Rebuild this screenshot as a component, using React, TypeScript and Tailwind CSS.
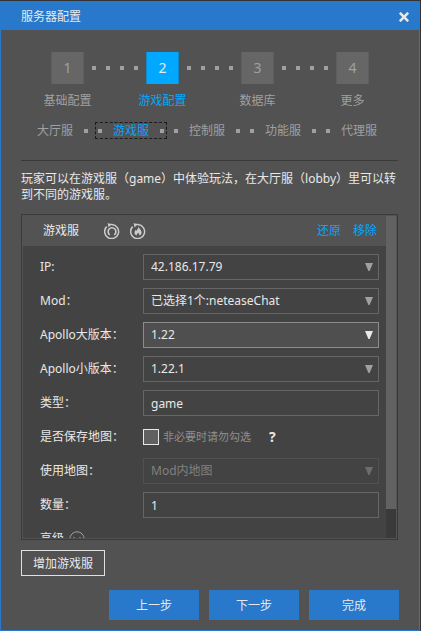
import { useState } from "react";
import type { ReactNode } from "react";

const steps = ["基础配置", "游戏配置", "数据库", "更多"];
const servers = ["大厅服", "游戏服", "控制服", "功能服", "代理服"];

function Dot() {
  return <span className="size-1 shrink-0 bg-[#a0a0a0]" />;
}

function Stepper() {
  return (
    <ol className="flex justify-between px-[42px] pt-[22px]">
      {steps.map((label, i) => {
        const active = i === 1;
        return (
          <li key={label} className={i < steps.length - 1 ? "flex flex-1" : "flex"}>
            <div className="flex w-[49px] shrink-0 flex-col items-center">
              <span
                className={
                  active
                    ? "flex h-8 w-[33px] items-center justify-center border-x border-[#1489c9] bg-[#00a8ff] text-sm text-[#e8e8e8]"
                    : "flex h-8 w-[33px] items-center justify-center border-x border-[#5e5e5e] bg-[#666666] text-sm text-[#a0a0a0]"
                }
              >
                {i + 1}
              </span>
              <span
                className={
                  active
                    ? "mt-[9px] leading-4 whitespace-nowrap text-[#00a8ff]"
                    : "mt-[9px] leading-4 whitespace-nowrap text-[#a0a0a0]"
                }
              >
                {label}
              </span>
            </div>
            {i < steps.length - 1 && (
              <div className="flex h-8 flex-1 items-center justify-center gap-[10px]">
                <Dot />
                <Dot />
                <Dot />
                <Dot />
              </div>
            )}
          </li>
        );
      })}
    </ol>
  );
}

function ServerTabs() {
  return (
    <nav className="mt-[13px] flex justify-center gap-1 pr-[6px]">
      {servers.map((label, i) => (
        <button
          key={label}
          type="button"
          className={
            i === 1
              ? "flex h-[17px] w-[72px] items-center justify-between border border-dashed border-[#1c1c1c] px-[2px] pt-px leading-3 text-[#00a8ff]"
              : "flex h-[17px] w-[72px] items-center justify-between px-[3px] pt-px leading-3 text-[#a0a0a0]"
          }
        >
          {i > 0 ? <Dot /> : <span className="size-1" />}
          {label}
          {i < servers.length - 1 ? <Dot /> : <span className="size-1" />}
        </button>
      ))}
    </nav>
  );
}

function Row({ label, id, children }: { label: string; id: string; children: ReactNode }) {
  return (
    <div className="flex h-[26px] shrink-0 items-center">
      <label htmlFor={id} className="w-[103px] shrink-0 whitespace-nowrap">
        {label}
      </label>
      {children}
    </div>
  );
}

function Select({
  label,
  id,
  value,
  focused = false,
  disabled = false,
}: {
  label: string;
  id: string;
  value: string;
  focused?: boolean;
  disabled?: boolean;
}) {
  const look = focused
    ? "border-[#8c8c8c] bg-[#4f4f4f]"
    : disabled
      ? "border-[#505050] text-[#808080] opacity-100"
      : "border-[#666666]";
  const arrow = focused ? "text-[#e8e8e8]" : disabled ? "text-[#6c6c6c]" : "text-[#a0a0a0]";
  return (
    <Row label={label} id={id}>
      <div className="relative min-w-0 flex-1">
        <select
          id={id}
          disabled={disabled}
          className={`block h-[26px] w-full appearance-none border px-[7px] outline-none ${look}`}
        >
          <option>{value}</option>
        </select>
        <svg
          viewBox="0 0 8 8"
          className={`pointer-events-none absolute top-[9px] right-[6px] size-2 ${arrow}`}
          fill="currentColor"
          aria-hidden="true"
        >
          <path d="M0 0H8L4.6 8H3.4Z" />
        </svg>
      </div>
    </Row>
  );
}

function TextField({ label, id, initial }: { label: string; id: string; initial: string }) {
  const [value, setValue] = useState(initial);
  return (
    <Row label={label} id={id}>
      <input
        id={id}
        type="text"
        value={value}
        onChange={(e) => setValue(e.target.value)}
        className="h-[26px] min-w-0 flex-1 border border-[#666666] px-[7px] outline-none"
      />
    </Row>
  );
}

function RestartIcon({ flame = false }: { flame?: boolean }) {
  return (
    <svg viewBox="0 0 16 16" className="size-4" fill="none" stroke="currentColor" aria-hidden="true">
      <path d="M2.7 3.6A7 7 0 1 0 8 1.6H5" strokeWidth="1.5" />
      <path d="M3.6 0L7.2 1.6L4.6 4.4Z" fill="currentColor" stroke="none" />
      {flame ? (
        <path
          d="M8.3 3.6C8.6 5.4 11.8 7 11.6 9.8C11.5 11.2 10.6 12.2 9.3 12.6C9.6 11.4 9.1 10.6 8.1 9.7C7.2 10.6 6.6 11.4 6.9 12.6C5.3 12.1 4.4 10.9 4.5 9.5C4.6 8.4 5.2 7.7 5.6 6.8L6.6 7.7C7.5 6.6 8.3 5.3 8.3 3.6Z"
          fill="currentColor"
          stroke="none"
        />
      ) : (
        <path d="M5.8 11.8A3.9 3.9 0 1 1 10.2 11.8" strokeWidth="1.6" />
      )}
    </svg>
  );
}

function GamePanel() {
  return (
    <section className="mr-[21px] ml-5 mt-[11px] flex min-h-0 flex-1 border border-[#3a3a3a] bg-[#535353] p-px">
      <div className="flex min-w-0 flex-1 flex-col overflow-hidden">
        <header className="flex h-[30px] shrink-0 items-center pr-[9px] pl-5">
          <h2>游戏服</h2>
          <button type="button" aria-label="重启" className="ml-[25px] text-[#cccccc]">
            <RestartIcon />
          </button>
          <button type="button" aria-label="热更新" className="ml-[10px] text-[#cccccc]">
            <RestartIcon flame />
          </button>
          <button type="button" className="ml-auto text-[#00a8ff]">
            还原
          </button>
          <button type="button" className="ml-3 text-[#00a8ff]">
            移除
          </button>
        </header>
        <div className="flex min-h-0 flex-1 flex-col gap-2 overflow-hidden bg-[#434343] pt-2 pr-[7px] pl-[17px]">
          <Select id="ip" label="IP:" value="42.186.17.79" />
          <Select id="mod" label="Mod：" value="已选择1个:neteaseChat" />
          <Select id="major" label="Apollo大版本：" value="1.22" focused />
          <Select id="minor" label="Apollo小版本：" value="1.22.1" />
          <TextField id="type" label="类型：" initial="game" />
          <Row id="save" label="是否保存地图：">
            <input
              id="save"
              type="checkbox"
              className="size-4 appearance-none border border-[#e8e8e8] bg-[#606060] checked:bg-[#00a8ff]"
            />
            <span className="ml-1 text-[11px] text-[#909090]">非必要时请勿勾选</span>
            <button type="button" aria-label="帮助" className="ml-[18px] text-sm font-bold">
              ?
            </button>
          </Row>
          <Select id="map" label="使用地图：" value="Mod内地图" disabled />
          <TextField id="count" label="数量：" initial="1" />
          <button type="button" className="flex h-[26px] shrink-0 items-center gap-[5px]">
            高级
            <svg viewBox="0 0 16 16" className="size-4 text-[#a0a0a0]" fill="none" stroke="currentColor" aria-hidden="true">
              <circle cx="8" cy="8" r="7.2" />
              <path d="M4.5 6.5L8 10L11.5 6.5" strokeWidth="1.5" />
            </svg>
          </button>
        </div>
      </div>
      <div className="flex w-[10px] shrink-0 flex-col bg-[#3a3a3a]">
        <div className="h-[91%] bg-[#626262]" />
      </div>
    </section>
  );
}

export default function App() {
  return (
    <div className="flex h-screen flex-col bg-[#333333] pt-px pr-px font-['Noto_Sans','Noto_Sans_CJK_SC',sans-serif] text-xs text-[#e8e8e8]">
      <main className="flex min-h-0 flex-1 flex-col border-x border-b border-[#2879cc] bg-[#525252]">
        <header className="flex h-[29px] shrink-0 items-center justify-between bg-[#2879cc] pt-[3px] pr-[10px] pl-5">
          <h1>服务器配置</h1>
          <button type="button" aria-label="关闭">
            <svg viewBox="0 0 10 10" className="size-[10px]" stroke="currentColor" strokeWidth="2.6" aria-hidden="true">
              <path d="M0.8 0.8L9.2 9.2M9.2 0.8L0.8 9.2" />
            </svg>
          </button>
        </header>
        <Stepper />
        <ServerTabs />
        <hr className="mr-[21px] ml-5 mt-[21px] border-[#3a3a3a]" />
        <p className="mx-5 mt-[10px] leading-4">
          玩家可以在游戏服（game）中体验玩法，在大厅服（lobby）里可以转到不同的游戏服。
        </p>
        <GamePanel />
        <div className="mt-[10px] px-5">
          <button type="button" className="h-[26px] w-21 border border-[#e0e0e0] pt-px">
            增加游戏服
          </button>
        </div>
        <footer className="mt-[14px] mb-[10px] flex justify-end gap-[10px] pr-5">
          {["上一步", "下一步", "完成"].map((label) => (
            <button key={label} type="button" className="h-[30px] w-[90px] bg-[#2879cc] pt-[2px]">
              {label}
            </button>
          ))}
        </footer>
      </main>
    </div>
  );
}
